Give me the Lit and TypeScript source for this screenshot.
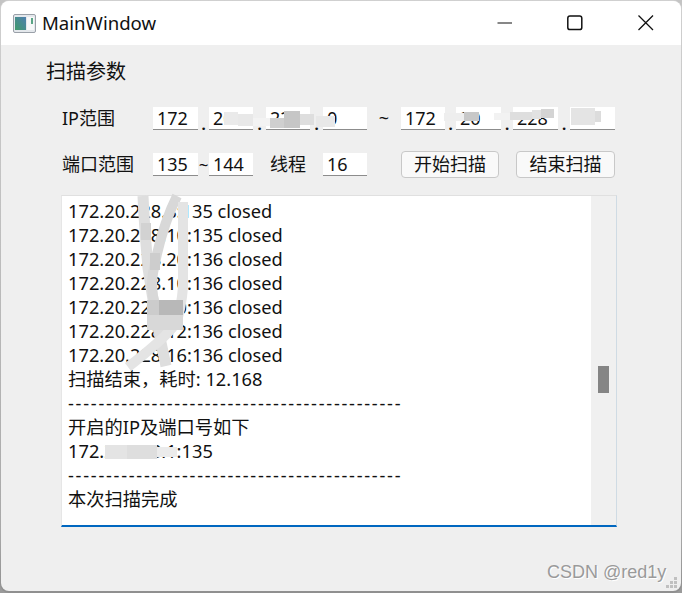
import { LitElement, html, css, svg } from "lit";
import { customElement } from "lit/decorators.js";

const CLOSED = [
  "172.20.228.8:135 closed",
  "172.20.228.10:135 closed",
  "172.20.228.20:136 closed",
  "172.20.228.10:136 closed",
  "172.20.228.10:136 closed",
  "172.20.228.12:136 closed",
  "172.20.228.16:136 closed",
];
const DASH = "-".repeat(44);

const BLOTS: [number, number, number, number, string][] = [
  [224, 112, 14, 13, "#eaeaea"], [238, 114, 15, 12, "#e8e8e8"], [253, 118, 17, 8, "#f3f3f3"], [270, 118, 14, 10, "#cfcfcf"], [284, 111, 16, 17, "#c6c6c6"], [300, 114, 14, 11, "#dedede"],
  [316, 116, 19, 11, "#e8e8e8"],
  [444, 113, 20, 8, "#eeeeee"], [464, 112, 15, 9, "#c8c8c8"], [494, 113, 20, 7, "#f2f2f2"], [510, 112, 22, 8, "#dedede"], [532, 110, 9, 9, "#e2e2e2"], [541, 109, 13, 9, "#d4d4d4"], [571, 108, 24, 17, "#e4e4e4"], [595, 111, 6, 11, "#dcdcdc"],
  [105, 445, 22, 14, "#e4e4e4"], [127, 445, 30, 14, "#dedede"], [157, 447, 20, 10, "#ebebeb"],
];
const STROKES: [string, number, string][] = [
  ["M143 196 C144 220 146 245 148 268 C152 295 158 330 166 366", 11, "#dedede"],
  ["M177 196 C170 210 160 235 153 273 C151 285 152 295 155 305", 10, "#d8d8d8"],
  ["M183 202 L183 287 C182 300 180 312 176 323 C168 335 150 350 128 367", 10, "#e4e4e4"],
];
const PIXELS: [number, number, number, number, string][] = [
  [147, 300, 12, 15, "#cccccc"], [159, 300, 24, 15, "#b8b8b8"], [147, 315, 36, 15, "#d8d8d8"], [150, 253, 10, 17, "#cdcdcd"], [141, 223, 10, 17, "#d2d2d2"],
];

@customElement("app-root")
export class AppRoot extends LitElement {
  static styles = css`
    :host { display: block; width: 682px; height: 593px; background: linear-gradient(#c4c4c4, #9a9a9a); overflow: hidden; }
    * { box-sizing: border-box; }
    .win {
      position: relative; width: 682px; height: 593px; padding: 1px 1px 2px 1px;
      background: linear-gradient(#d0d0d0, #a8a8a8 90%, #8f8f8f); border-radius: 9px;
      font-family: "Noto Sans", "Noto Sans CJK SC", sans-serif; color: #111;
    }
    .inner { height: 100%; display: flex; flex-direction: column; border-radius: 8px; overflow: hidden; background: #efefef; }
    .title { flex: none; height: 44px; background: #fff; display: flex; align-items: center; padding-left: 12px; }
    .appicon { width: 23px; height: 19px; margin-right: 6px; flex: none; }
    .title-text { font-size: 18.6px; line-height: 24px; flex: 1; color: #111; }
    .caps { display: flex; height: 100%; align-items: center; }
    .cap { width: 71px; height: 100%; display: flex; align-items: center; justify-content: center; }
    .cap svg { width: 16px; height: 16px; }
    .body { flex: 1; padding: 15px 0 0 45px; display: flex; flex-direction: column; }
    .group { font-size: 20px; line-height: 24px; height: 24px; }
    .row { display: flex; align-items: center; height: 26px; margin-left: 16px; }
    .r1 { margin-top: 21px; }
    .r2 { margin-top: 20px; }
    .lbl { width: 91px; flex: none; line-height: 24px; font-size: 18px; }
    .in {
      width: 45px; height: 23px; background: #fff; border-bottom: 1px solid #8c8c8c;
      font-size: 18px; line-height: 23px; padding-left: 4px; flex: none; color: #111; overflow: hidden;
    }
    .w44 { width: 44px; }
    .dot { width: 12px; flex: none; text-align: center; font-size: 15px; line-height: 20px; padding-top: 11px; font-weight: 700; }
    .w11 { width: 11px; }
    .w13 { width: 13px; }
    .tilde { width: 34px; flex: none; text-align: center; font-size: 18px; }
    .tsep { width: 11px; flex: none; text-align: center; font-size: 17px; }
    .lbl2 { width: 70px; flex: none; padding-left: 17px; font-size: 18px; line-height: 24px; }
    .btn {
      width: 98px; height: 27px; border: 1px solid #c8c8c8; border-radius: 4px; background: #f9f9f9;
      font-size: 18px; line-height: 25px; text-align: center; flex: none; color: #111;
    }
    .gap34 { width: 34px; flex: none; }
    .gap17 { width: 17px; flex: none; }
    .btn.b2 { width: 99px; }
    .log {
      margin: 18px 0 0 15px; width: 556px; height: 332px; display: flex; background: #fff;
      border: 1px solid #e0e0e0; border-right-color: #cfdbe4; border-bottom: 2px solid #0067c0; border-left-color: #e6e6e6;
    }
    .lines { flex: 1; padding: 3px 0 0 6px; font-size: 18.25px; line-height: 24px; overflow: hidden; }
    .line { height: 24px; white-space: nowrap; }
    .dash { letter-spacing: 1.72px; }
    .bar { width: 25px; flex: none; background: #f0f0f0; display: flex; flex-direction: column; padding: 170px 0 0 7px; }
    .thumb { width: 11px; height: 27px; background: #858585; }
    .mark {
      position: absolute; left: 547px; top: 560px; font-family: "Liberation Sans", Arial, sans-serif; font-size: 18px; line-height: 24px;
      color: #9a9a9a; text-shadow: 1px 1px 0 #fff; white-space: nowrap;
    }
    .over { position: absolute; left: 0; top: 0; width: 682px; height: 593px; pointer-events: none; }
    .grip { position: absolute; right: 4px; bottom: 4px; width: 12px; height: 12px; }
  `;

  render() {
    return html`
      <div class="win">
        <div class="inner">
          <div class="title">
            <svg class="appicon" viewBox="0 0 23 19">
              <defs><linearGradient id="g" x1="0" y1="1" x2="1" y2="0"><stop offset="0" stop-color="#3f9a6a"/><stop offset="1" stop-color="#4f7fb0"/></linearGradient></defs>
              <rect x=".5" y=".5" width="22" height="18" rx="1.5" fill="#e4e8ec" stroke="#9aa0a8"/>
              <rect x="2" y="3" width="11" height="13" fill="url(#g)"/>
              <rect x="14" y="3" width="7" height="13" fill="#f7f8f9"/>
              <rect x="18" y="4" width="2" height="6" fill="#5aa585"/>
            </svg>
            <div class="title-text">MainWindow</div>
            <div class="caps">
              <div class="cap"><svg viewBox="0 0 16 16"><path d="M1.5 8H16" stroke="#111" stroke-width="1.2" fill="none"/></svg></div>
              <div class="cap"><svg viewBox="0 0 16 16"><rect x=".8" y="1" width="14" height="13.6" rx="2.2" stroke="#111" stroke-width="1.5" fill="none"/></svg></div>
              <div class="cap"><svg viewBox="0 0 16 16"><path d="M.5 .5L15 15M15 .5L.5 15" stroke="#111" stroke-width="1.3" fill="none"/></svg></div>
            </div>
          </div>
          <div class="body">
            <div class="group">扫描参数</div>
            <div class="row r1">
              <div class="lbl">IP范围</div>
              <div class="in">172</div><div class="dot w11">.</div>
              <div class="in w44">20</div><div class="dot w13">.</div>
              <div class="in w44">228</div><div class="dot w13">.</div>
              <div class="in w44">0</div>
              <div class="tilde">~</div>
              <div class="in w44">172</div><div class="dot w11">.</div>
              <div class="in">20</div><div class="dot">.</div>
              <div class="in">228</div><div class="dot">.</div>
              <div class="in">0</div>
            </div>
            <div class="row r2">
              <div class="lbl">端口范围</div>
              <div class="in">135</div><div class="tsep">~</div>
              <div class="in w44">144</div>
              <div class="lbl2">线程</div>
              <div class="in w44">16</div>
              <div class="gap34"></div>
              <div class="btn">开始扫描</div>
              <div class="gap17"></div>
              <div class="btn b2">结束扫描</div>
            </div>
            <div class="log">
              <div class="lines">
                ${CLOSED.map((l) => html`<div class="line">${l}</div>`)}
                <div class="line">扫描结束，耗时: 12.168</div>
                <div class="line dash">${DASH}</div>
                <div class="line">开启的IP及端口号如下</div>
                <div class="line">172.20.228.1:135</div>
                <div class="line dash">${DASH}</div>
                <div class="line">本次扫描完成</div>
              </div>
              <div class="bar"><div class="thumb"></div></div>
            </div>
          </div>
        </div>
        <svg class="over" viewBox="0 0 682 593">
          ${BLOTS.map(([x, y, w, h, c]) => svg`<rect x=${x} y=${y} width=${w} height=${h} fill=${c}/>`)}
          ${STROKES.map(([d, w, c]) => svg`<path d=${d} stroke=${c} stroke-width=${w} fill="none"/>`)}
          ${PIXELS.map(([x, y, w, h, c]) => svg`<rect x=${x} y=${y} width=${w} height=${h} fill=${c}/>`)}
        </svg>
        <div class="mark">CSDN @red1y</div>
        <svg class="grip" viewBox="0 0 12 12">
          <g fill="#c0c0c0"><rect x="8" y="0" width="3" height="3"/><rect x="4" y="4" width="3" height="3"/><rect x="8" y="4" width="3" height="3"/><rect x="0" y="8" width="3" height="3"/><rect x="4" y="8" width="3" height="3"/><rect x="8" y="8" width="3" height="3"/></g>
        </svg>
      </div>
    `;
  }
}
